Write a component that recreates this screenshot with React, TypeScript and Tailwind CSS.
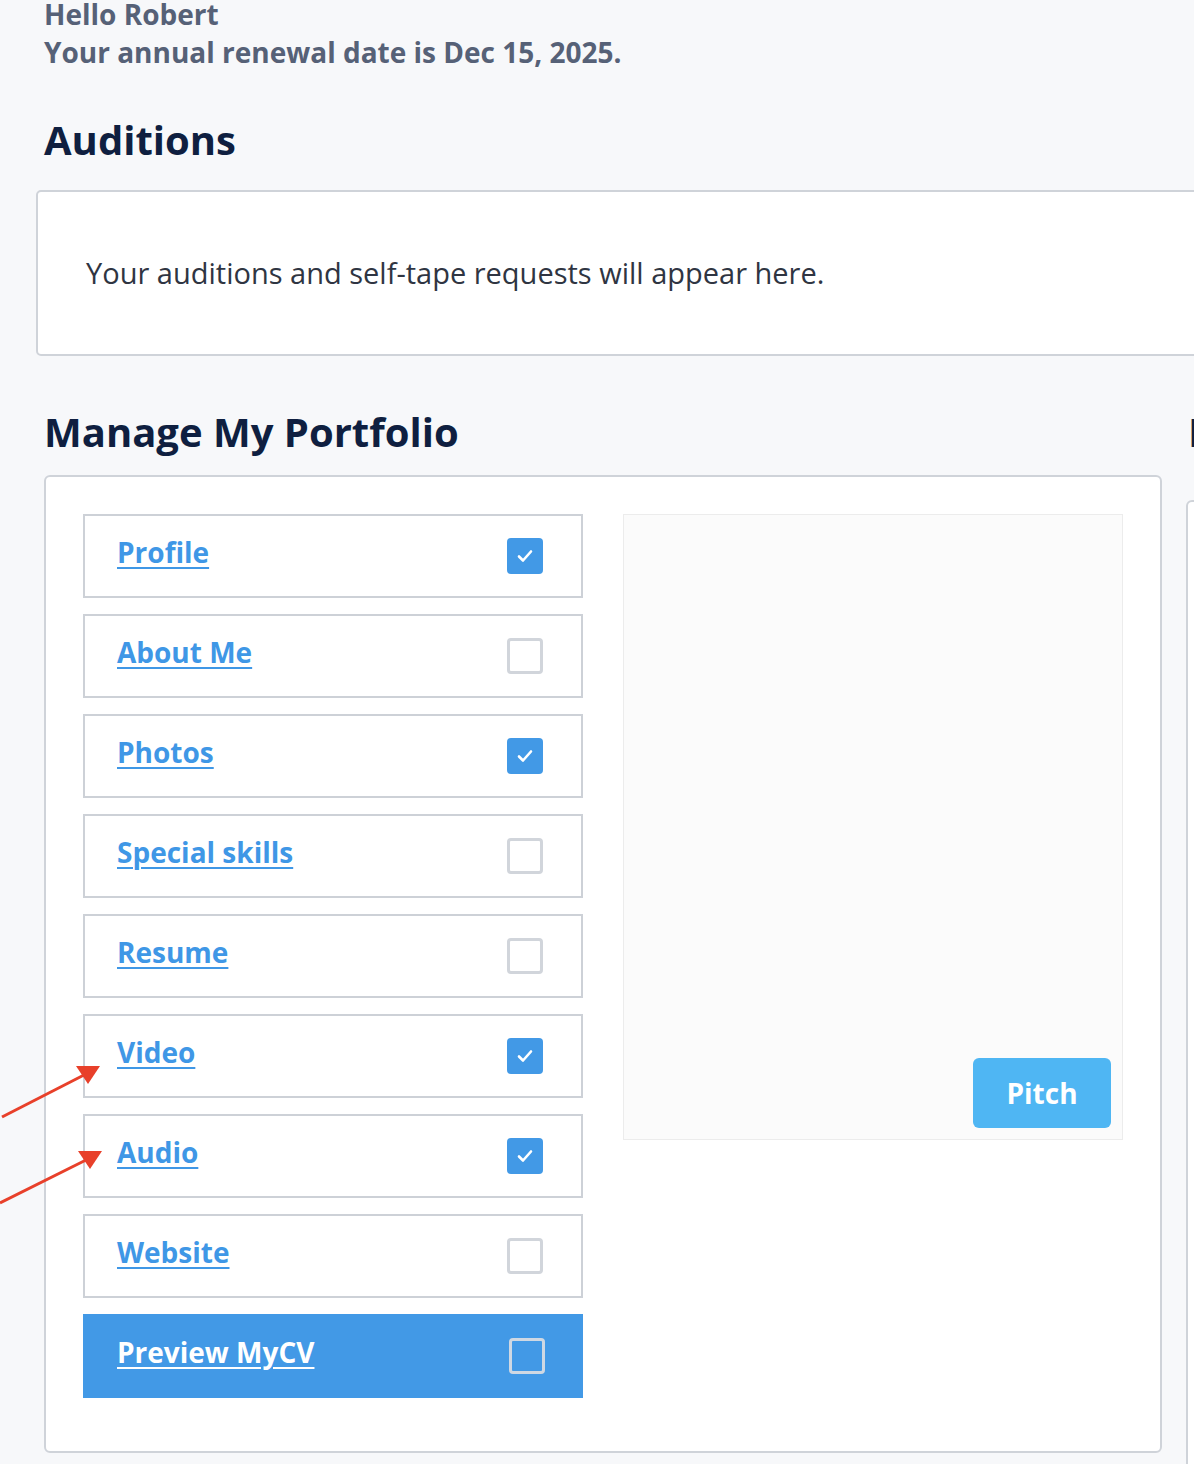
import React from "react";

type Item = { label: string; checked: boolean };

const items: Item[] = [
  { label: "Profile", checked: true },
  { label: "About Me", checked: false },
  { label: "Photos", checked: true },
  { label: "Special skills", checked: false },
  { label: "Resume", checked: false },
  { label: "Video", checked: true },
  { label: "Audio", checked: true },
  { label: "Website", checked: false },
];

const Check = ({ checked, light }: { checked: boolean; light?: boolean }) => {
  if (checked) {
    return (
      <span className="flex h-[36px] w-[36px] items-center justify-center rounded-[4px] bg-[#4299e6]">
        <svg width="20" height="20" viewBox="0 0 20 20" fill="none">
          <path
            d="M4 10.5l4 4 8-9"
            stroke="#fff"
            strokeWidth="2.6"
            strokeLinecap="round"
            strokeLinejoin="round"
          />
        </svg>
      </span>
    );
  }
  return (
    <span
      className={`block h-[36px] w-[36px] rounded-[4px] border-[3px] ${
        light ? "border-[#cfd8e3]" : "border-[#d1d5db] bg-white"
      }`}
    />
  );
};

const Row = ({ item }: { item: Item }) => (
  <div className="flex h-[84px] items-center justify-between border-2 border-[#cdd1d7] bg-white pl-[32px] pr-[38px]">
    <a
      href="#"
      className="-mt-[8px] text-[28px] font-bold text-[#3f97e6] underline decoration-2 underline-offset-[4px]"
    >
      {item.label}
    </a>
    <Check checked={item.checked} />
  </div>
);

export default function App() {
  return (
    <div
      className="relative h-[1464px] w-[1194px] overflow-hidden bg-[#f7f8fa]"
      style={{ fontFamily: '"Open Sans", "Noto Sans", sans-serif' }}
    >
      <div className="-mt-[5px] pl-[44px] text-[28px] font-bold leading-[38px] text-[#566177]">
        <div>Hello Robert</div>
        <div>Your annual renewal date is Dec 15, 2025.</div>
      </div>

      <h2 className="mt-[41px] pl-[44px] text-[40px] font-bold leading-[56px] text-[#0f1f40]">
        Auditions
      </h2>

      <div className="ml-[36px] mt-[22px] flex h-[166px] w-[1220px] items-center rounded-[5px] border-2 border-[#cfd3d9] bg-white pl-[48px]">
        <p className="text-[29px] leading-[38px] text-[#2f3542]">
          Your auditions and self-tape requests will appear here.
        </p>
      </div>

      <div className="mt-[48px] flex gap-[24px] pl-[44px]">
        <div className="w-[1118px] shrink-0">
          <h2 className="text-[40px] font-bold leading-[56px] text-[#0f1f40]">
            Manage My Portfolio
          </h2>
          <div className="mt-[15px] flex gap-[40px] rounded-[6px] border-2 border-[#cfd3d9] bg-white pb-[53px] pl-[37px] pt-[37px]">
            <div className="flex w-[500px] flex-col gap-[16px]">
              {items.map((it) => (
                <Row key={it.label} item={it} />
              ))}
              <div className="flex h-[84px] items-center justify-between bg-[#4299e6] pl-[34px] pr-[38px]">
                <a
                  href="#"
                  className="-mt-[8px] text-[28px] font-bold text-white underline decoration-2 underline-offset-[4px]"
                >
                  Preview MyCV
                </a>
                <Check checked={false} light />
              </div>
            </div>
            <div className="flex h-[626px] w-[500px] items-end justify-end border border-[#ececec] bg-[#fbfbfb] pb-[11px] pr-[11px]">
              <button className="h-[70px] w-[138px] rounded-[6px] bg-[#4fb6f3] text-[28px] font-bold text-white">
                Pitch
              </button>
            </div>
          </div>
        </div>
        <div className="w-[400px] shrink-0">
          <h2 className="pl-[2px] text-[40px] font-bold leading-[56px] text-[#0f1f40]">
            My Notes
          </h2>
          <div className="mt-[40px] h-[1000px] rounded-[6px] border-2 border-[#cfd3d9] bg-white" />
        </div>
      </div>

      <svg
        className="pointer-events-none absolute left-0 top-0"
        width="1194"
        height="1464"
        viewBox="0 0 1194 1464"
      >
        <line x1="2" y1="1117" x2="84" y2="1075" stroke="#e8402a" strokeWidth="3" />
        <polygon points="100,1066 76,1066 88,1084" fill="#e8402a" />
        <line x1="0" y1="1203" x2="86" y2="1160" stroke="#e8402a" strokeWidth="3" />
        <polygon points="102,1151 78,1151 90,1169" fill="#e8402a" />
      </svg>
    </div>
  );
}
